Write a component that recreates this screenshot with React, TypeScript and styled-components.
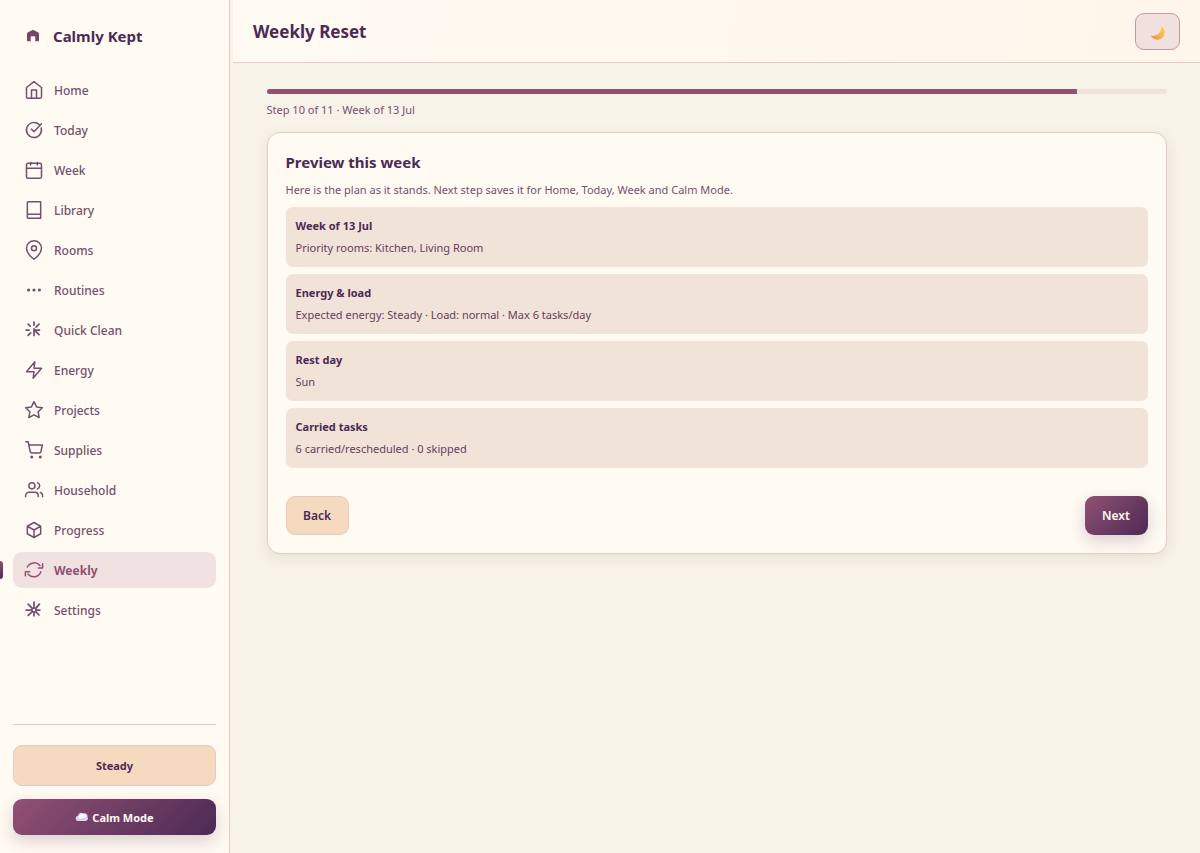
import React from "react";
import styled, { createGlobalStyle, css } from "styled-components";

const color = {
  ink: "#4b2a55",
  inkSoft: "#74506f",
  plum: "#935073",
  cream: "#fffaf2",
  page: "#f8f3e8",
  sand: "#f1e3d7",
  peach: "#f6dac0",
  line: "#e5ccc3",
};
const gradient = "linear-gradient(135deg, #935073, #4b2a55)";
const raised = "0 6px 16px rgba(75, 42, 85, 0.2)";

const GlobalStyle = createGlobalStyle`
  *, *::before, *::after { box-sizing: border-box; }
  body {
    margin: 0;
    background: ${color.page};
    color: ${color.ink};
    font-family: "Segoe UI", "Noto Sans", "Open Sans", sans-serif;
    font-size: 12px;
  }
  h1, h2, h3, p { margin: 0; }
  button { font-family: inherit; color: inherit; cursor: pointer; }
`;

const Shell = styled.div`
  display: flex;
  min-height: 100vh;
`;

const Sidebar = styled.aside`
  display: flex;
  flex-direction: column;
  flex: 0 0 230px;
  position: sticky;
  top: 0;
  height: 100vh;
  min-height: 780px;
  padding: 18px 13px;
  background: ${color.cream};
  border-right: 1px solid ${color.line};
`;

const Brand = styled.a`
  display: flex;
  align-items: center;
  gap: 10px;
  height: 36px;
  padding: 0 10px;
  margin-bottom: 18px;
  color: ${color.ink};
  font-size: 15px;
  font-weight: 700;
  text-decoration: none;
`;

const Nav = styled.nav`
  display: flex;
  flex-direction: column;
  gap: 4px;
`;

const NavLink = styled.a<{ $active?: boolean }>`
  position: relative;
  display: flex;
  align-items: center;
  gap: 10px;
  height: 36px;
  padding: 0 11px;
  border-radius: 9px;
  color: ${color.inkSoft};
  font-size: 12px;
  font-weight: 500;
  text-decoration: none;
  ${(p) =>
    p.$active &&
    css`
      background: #f1e2e1;
      color: ${color.plum};
      font-weight: 700;
      &::before {
        content: "";
        position: absolute;
        left: -13px;
        top: 9px;
        width: 3px;
        height: 18px;
        border-radius: 0 3px 3px 0;
        background: ${gradient};
      }
    `}
`;

const NavIcon = styled.svg`
  flex: none;
  width: 20px;
  height: 20px;
  fill: none;
  stroke: currentColor;
  stroke-width: 1.8;
  stroke-linecap: round;
  stroke-linejoin: round;
`;

const SidebarFooter = styled.div`
  display: flex;
  flex-direction: column;
  gap: 13px;
  margin-top: auto;
  padding-top: 20px;
  border-top: 1px solid ${color.line};
`;

const SideButton = styled.button<{ $primary?: boolean }>`
  display: flex;
  align-items: center;
  justify-content: center;
  gap: 4px;
  height: ${(p) => (p.$primary ? 36 : 41)}px;
  border: ${(p) => (p.$primary ? "0" : `1px solid ${color.line}`)};
  border-radius: 9px;
  background: ${(p) => (p.$primary ? gradient : color.peach)};
  box-shadow: ${(p) => (p.$primary ? raised : "none")};
  && {
    color: ${(p) => (p.$primary ? color.cream : color.ink)};
  }
  font-size: 11px;
  font-weight: 700;
`;

const Main = styled.div`
  flex: 1;
  min-width: 0;
  padding-left: 3px;
`;

const Header = styled.header`
  display: flex;
  align-items: center;
  justify-content: space-between;
  height: 63px;
  padding: 0 20px;
  background: linear-gradient(100deg, #fffaf2, #fff6eb);
  border-bottom: 1px solid ${color.line};
`;

const PageTitle = styled.h1`
  font-size: 17px;
  font-weight: 700;
`;

const ThemeButton = styled.button`
  display: grid;
  place-items: center;
  width: 45px;
  height: 37px;
  padding: 3px 0 0;
  border: 1px solid #c494a8;
  border-radius: 9px;
  background: #f0e1de;
`;

const Content = styled.main`
  max-width: 966px;
  margin: 0 auto;
  padding: 26px 33px;
`;

const Progress = styled.div`
  height: 5px;
  border-radius: 3px;
  background: ${color.sand};
  overflow: hidden;
`;

const ProgressFill = styled.div`
  height: 100%;
  background: ${color.plum};
`;

const StepNote = styled.p`
  margin: 7px 0 14px;
  color: ${color.inkSoft};
  font-size: 11px;
  line-height: 17px;
`;

const Card = styled.section`
  padding: 18px;
  border: 1px solid ${color.line};
  border-radius: 13px;
  background: ${color.cream};
  box-shadow: 0 4px 14px rgba(75, 60, 45, 0.1);
`;

const CardTitle = styled.h2`
  font-size: 15px;
  font-weight: 700;
  line-height: 22px;
`;

const Lead = styled.p`
  margin: 7px 0;
  color: ${color.inkSoft};
  font-size: 11px;
  line-height: 20px;
`;

const Summary = styled.div`
  display: grid;
  gap: 7px;
`;

const SummaryItem = styled.article`
  height: 60px;
  padding: 9px 10px;
  border-radius: 7px;
  background: ${color.sand};
  line-height: 20px;
`;

const ItemTitle = styled.h3`
  margin-bottom: 2px;
  font-size: 11px;
  font-weight: 700;
`;

const ItemText = styled.p`
  color: #65405f;
  font-size: 11px;
`;

const Actions = styled.div`
  display: flex;
  justify-content: space-between;
  margin-top: 28px;
`;

const ActionButton = styled.button<{ $primary?: boolean }>`
  width: 63px;
  height: 39px;
  padding: 0;
  border: ${(p) => (p.$primary ? "0" : `1px solid ${color.line}`)};
  border-radius: 9px;
  background: ${(p) => (p.$primary ? gradient : color.peach)};
  box-shadow: ${(p) => (p.$primary ? raised : "none")};
  && {
    color: ${(p) => (p.$primary ? color.cream : color.ink)};
  }
  font-size: 12px;
  font-weight: 600;
`;

const navItems: { label: string; icon: React.ReactNode }[] = [
  {
    label: "Home",
    icon: <path d="M3 9l9-7 9 7v11a2 2 0 0 1-2 2H5a2 2 0 0 1-2-2zM9 22V12h6v10" />,
  },
  { label: "Today", icon: <path d="M9 11l3 3 9-9.500M20.600 9.500A9 9 0 1 1 18 5.300" /> },
  {
    label: "Week",
    icon: (
      <>
        <rect x="3" y="4" width="18" height="18" rx="2" />
        <path d="M16 3v3M8 3v3M3 10h18" />
      </>
    ),
  },
  { label: "Library", icon: <path d="M5 2h15v20H5.500a1.500 1.500 0 0 1-1.500-1.500V3a1 1 0 0 1 1-1zM4 18a1 1 0 0 1 1-1h15" /> },
  {
    label: "Rooms",
    icon: (
      <>
        <path d="M21 10c0 7-9 13-9 13s-9-6-9-13a9 9 0 0 1 18 0z" />
        <circle cx="12" cy="10" r="3" />
      </>
    ),
  },
  {
    label: "Routines",
    icon: (
      <>
        <circle cx="5.500" cy="12" r="1" />
        <circle cx="12" cy="12" r="1" />
        <circle cx="18.500" cy="12" r="1" />
      </>
    ),
  },
  {
    label: "Quick Clean",
    icon: (
      <path
        strokeWidth="2.1"
        d="M12 2.500v3.500M2.500 12h3.500M5 5l2.500 2.500M5 18.500l3-3M18 5l-3.500 3.500M12 10.500v8M12 12h6.500M12 11.500l6 6"
      />
    ),
  },
  { label: "Energy", icon: <path d="M13 2L3 14h9l-1 8 10-12h-9l1-8z" /> },
  {
    label: "Projects",
    icon: <path d="M12 2l3.090 6.260L22 9.270l-5 4.870 1.180 6.880L12 17.770l-6.180 3.250L7 14.140 2 9.270l6.910-1.010z" />,
  },
  {
    label: "Supplies",
    icon: (
      <>
        <circle cx="9.300" cy="20.300" r=".9" />
        <circle cx="19.500" cy="20.300" r=".9" />
        <path d="M2 2h3l2.400 12a2 2 0 0 0 2 1.600h8.900a2 2 0 0 0 2-1.600L22 6H6" />
      </>
    ),
  },
  {
    label: "Household",
    icon: (
      <>
        <path d="M17 20v-1.300a4 4 0 0 0-4-4H6a4 4 0 0 0-4 4V20M22.300 20v-1.300a4 4 0 0 0-2.700-3.600M16.200 3.200a4 4 0 0 1 0 7.500" />
        <circle cx="9.500" cy="7" r="3.700" />
      </>
    ),
  },
  { label: "Progress", icon: <path d="M12 3l8 4.500v9L12 21l-8-4.500v-9zM4 7.500l8 4.500 8-4.500M12 12v9" /> },
  {
    label: "Weekly",
    icon: <path d="M22.300 4.500v5h-5M1.700 19v-5h5M4 8.400A9 9 0 0 1 19 6.700M20.300 14.200A9 9 0 0 1 5 17" />,
  },
  {
    label: "Settings",
    icon: (
      <>
        <circle cx="12" cy="12" r="2.500" />
        <path
          strokeWidth="2.1"
          d="M12 2.500v7M2.500 12h7M14.500 12h4.500M12 14.500v4.500M5 5l5 5M18.500 5l-4.500 5M5 18.500l5-4.500M18 18l-4-4"
        />
      </>
    ),
  },
];

const BrandMark = () => (
  <svg width="20" height="20" viewBox="0 0 20 20" aria-hidden="true">
    <path
      d="M10 3.700l5.300 2.900q.7.500.7 1.300v6.300q0 1-1 1h-2.700v-4q0-1-1-1H8.700q-1 0-1 1v4H5q-1 0-1-1V7.900q0-.8.700-1.300z"
      fill="#764668"
    />
  </svg>
);

const Cloud = () => (
  <svg width="13" height="10" viewBox="0 0 13 10" aria-hidden="true">
    <path d="M3.500 9A2.600 2.600 0 0 1 3 3.800 3.400 3.400 0 0 1 8.500 1.500 3 3 0 0 1 12.500 5 2.600 2.600 0 0 1 10 9z" fill="#d9d3f2" />
    <path d="M4 6.500A2 2 0 0 1 4.500 3 2.600 2.600 0 0 1 8.500 2.200 2.400 2.400 0 0 1 11.500 4.600Q8 7.500 4 6.500z" fill="#f6f3ff" />
  </svg>
);

const Moon = () => (
  <svg width="16" height="16" viewBox="0 0 16 16" aria-hidden="true">
    <defs>
      <linearGradient id="moon" x1="0" y1="1" x2="1" y2="0">
        <stop offset="0" stopColor="#e88245" />
        <stop offset=".45" stopColor="#f9b04e" />
        <stop offset="1" stopColor="#ffd35c" />
      </linearGradient>
    </defs>
    <path d="M11.200 1C16 4.500 16 11.500 10.500 14 7 15.500 2.500 14.300 .8 10.800 6 11.500 12 8.500 11.200 1z" fill="url(#moon)" />
  </svg>
);

const summary = [
  ["Week of 13 Jul", "Priority rooms: Kitchen, Living Room"],
  ["Energy & load", "Expected energy: Steady · Load: normal · Max 6 tasks/day"],
  ["Rest day", "Sun"],
  ["Carried tasks", "6 carried/rescheduled · 0 skipped"],
];

export default function App() {
  const progress = 90;
  return (
    <>
      <GlobalStyle />
      <Shell>
        <Sidebar>
          <Brand href="#home">
            <BrandMark />
            Calmly Kept
          </Brand>
          <Nav aria-label="Main">
            {navItems.map(({ label, icon }) => (
              <NavLink
                key={label}
                href={`#${label.toLowerCase().replace(" ", "-")}`}
                $active={label === "Weekly"}
                aria-current={label === "Weekly" ? "page" : undefined}
              >
                <NavIcon viewBox="0 0 24 24" aria-hidden="true">
                  {icon}
                </NavIcon>
                {label}
              </NavLink>
            ))}
          </Nav>
          <SidebarFooter>
            <SideButton type="button">Steady</SideButton>
            <SideButton type="button" $primary>
              <Cloud />
              Calm Mode
            </SideButton>
          </SidebarFooter>
        </Sidebar>
        <Main>
          <Header>
            <PageTitle>Weekly Reset</PageTitle>
            <ThemeButton type="button" aria-label="Switch to dark theme">
              <Moon />
            </ThemeButton>
          </Header>
          <Content>
            <Progress role="progressbar" aria-label="Weekly reset progress" aria-valuenow={progress} aria-valuemin={0} aria-valuemax={100}>
              <ProgressFill style={{ width: `${progress}%` }} />
            </Progress>
            <StepNote>Step 10 of 11 · Week of 13 Jul</StepNote>
            <Card>
              <CardTitle>Preview this week</CardTitle>
              <Lead>Here is the plan as it stands. Next step saves it for Home, Today, Week and Calm Mode.</Lead>
              <Summary>
                {summary.map(([title, text]) => (
                  <SummaryItem key={title}>
                    <ItemTitle>{title}</ItemTitle>
                    <ItemText>{text}</ItemText>
                  </SummaryItem>
                ))}
              </Summary>
              <Actions>
                <ActionButton type="button">Back</ActionButton>
                <ActionButton type="button" $primary>
                  Next
                </ActionButton>
              </Actions>
            </Card>
          </Content>
        </Main>
      </Shell>
    </>
  );
}
